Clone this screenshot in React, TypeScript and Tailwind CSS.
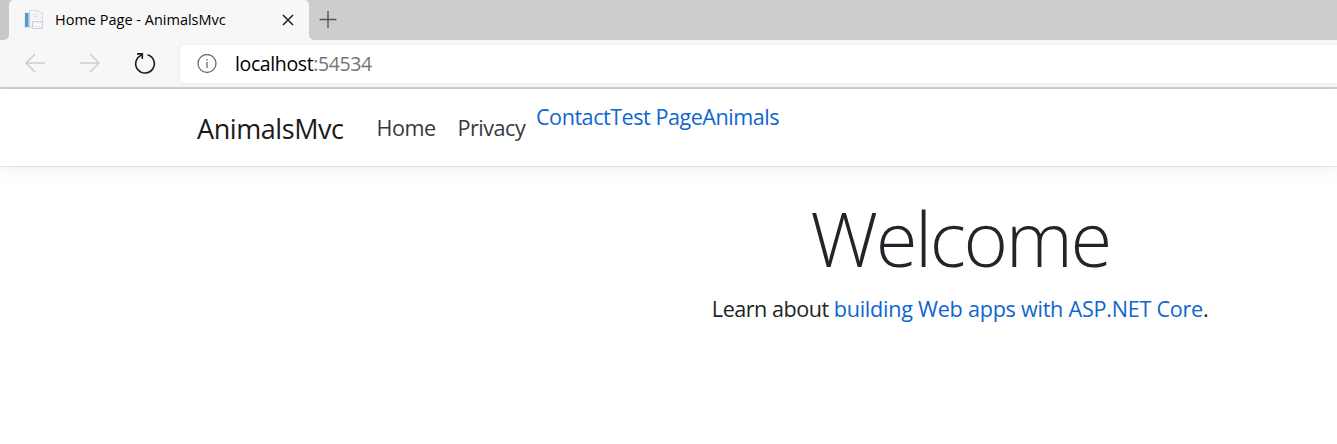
import React from "react";

function TabStrip() {
  return (
    <div className="flex h-10 bg-[#cdcdcd]">
      <div className="w-[9px] bg-[#f7f7f7]">
        <div className="h-10 w-[9px] rounded-br-[5px] bg-[#c8c8c8]" />
      </div>
      <div className="flex h-10 w-[300px] items-center rounded-t-[5px] bg-[#f7f7f7] pl-[14px]">
        <svg width="22" height="22" viewBox="0 0 22 22" fill="none">
          <rect x="1" y="3" width="6" height="16" fill="#e9edf0" />
          <rect x="2" y="4" width="3.5" height="14" fill="#4f9ccb" />
          <path d="M6.5 1.5h9l1 2h3v15h-13z" fill="#f3f4f6" stroke="#d9dce0" />
          <path d="M6.5 3v15" stroke="#c9ced6" />
          <path d="M10 5.5h4M10 7.5h5" stroke="#dde2ea" />
          <path d="M9.5 12.5h10v7h-10z" fill="#f0f2f6" stroke="#cdd1d8" />
          <path d="M11 11.5h7M11 15.5h7" stroke="#fff" />
        </svg>
        <span className="ml-[10px] w-[200px] whitespace-nowrap text-[14.5px] text-black">Home Page - AnimalsMvc</span>
        <svg className="ml-[27px]" width="12" height="12" viewBox="0 0 12 12" stroke="#222" strokeWidth="1.5">
          <path d="M1 1l10 10M11 1L1 11" />
        </svg>
      </div>
      <div className="flex-1 bg-[#f7f7f7]">
        <div className="flex h-10 rounded-bl-[5px] bg-[#cdcdcd] pt-[11px] pl-[10px]">
          <svg width="18" height="18" viewBox="0 0 18 18" stroke="#555" strokeWidth="1.4">
            <path d="M9 0v17M.5 8.5h17" />
          </svg>
        </div>
      </div>
    </div>
  );
}

function Toolbar() {
  return (
    <div className="flex h-[49px] border-b-2 border-[#cecece] bg-[#f7f7f7]">
      <svg className="mt-[12px] ml-[25px]" width="21" height="21" viewBox="0 0 21 21" fill="none" stroke="#cdcdcd" strokeWidth="1.5">
        <path d="M20 11H1M10 2L1 11l9 9" />
      </svg>
      <svg className="mt-[12px] ml-[34px]" width="21" height="21" viewBox="0 0 21 21" fill="none" stroke="#cdcdcd" strokeWidth="1.5">
        <path d="M0 11h19M10 2l9 9-9 9" />
      </svg>
      <svg className="mt-[12px] ml-[33px]" width="23" height="23" viewBox="0 0 23 23" fill="none" stroke="#1c1c1c" strokeWidth="1.6">
        <path d="M13.6 2.8a9.3 9.3 0 1 1-6.3.4L8 2.4" />
        <path d="M3 1.9h5.3v5.2" />
      </svg>
      <div className="mt-[5px] ml-[23px] flex h-[38px] flex-1 items-center rounded-l-[5px] bg-white pl-[17px] shadow-[0_0_4px_rgba(0,0,0,0.05)]">
        <svg width="20" height="20" viewBox="0 0 20 20" fill="none" stroke="#6b6b6b" strokeWidth="1.3">
          <circle cx="10" cy="9.5" r="9" />
          <path d="M10 8v6M10 5v1.6" />
        </svg>
        <span className="ml-[18px] whitespace-nowrap text-[19.5px] tracking-[-0.38px] text-[#757575]">
          <span className="text-black">localhost</span>:54534
        </span>
      </div>
    </div>
  );
}

export default function App() {
  return (
    <div className="h-[444px] w-full overflow-hidden bg-white font-['Open_Sans','Noto_Sans',sans-serif]">
      <TabStrip />
      <Toolbar />
      <header className="flex h-[78px] border-b border-[#dee2e6] pl-[197px] whitespace-nowrap shadow-[0_5px_16px_rgba(0,0,0,0.05)]">
        <a className="mt-[20px] w-[179.5px] text-[27px] leading-[40px] tracking-[-0.42px] text-[#1a1a1a]">AnimalsMvc</a>
        <a className="mt-[22px] w-[81px] text-[21.6px] leading-[34px] tracking-[-0.5px] text-[#343a40]">Home</a>
        <a className="mt-[22px] w-[78.5px] text-[21.6px] leading-[34px] tracking-[-0.5px] text-[#343a40]">Privacy</a>
        <a className="mt-[11px] text-[21.6px] leading-[34px] tracking-[-0.48px] text-[#0f66d0]">ContactTest PageAnimals</a>
      </header>
      <main className="ml-[583px] w-[754px] text-center whitespace-nowrap text-[#212529]">
        <h1 className="pt-[25px] text-[76px] leading-[92px] font-light tracking-[-2.4px]">Welcome</h1>
        <p className="mt-[8px] text-[21.6px] leading-[34px] tracking-[-0.5px]">
          Learn about <a className="tracking-[-0.25px] text-[#0f66d0]">building Web apps with ASP.NET Core</a>.
        </p>
      </main>
    </div>
  );
}
